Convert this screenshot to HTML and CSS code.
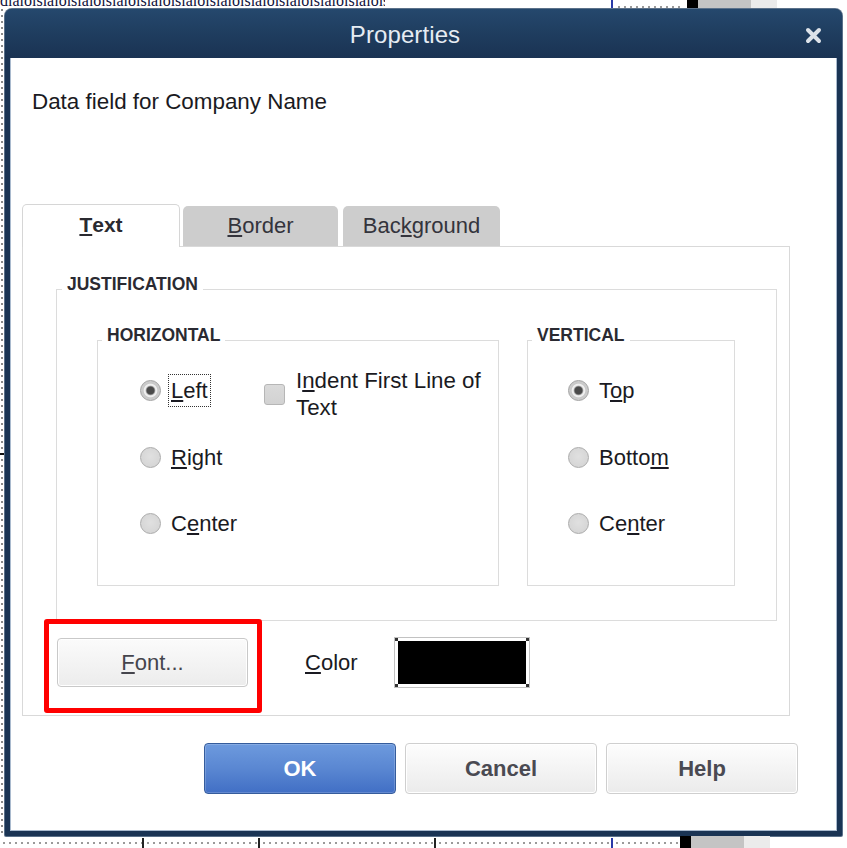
FILE: index.html
```html
<!DOCTYPE html>
<html lang="en">
<head>
<meta charset="utf-8">
<title>Properties</title>
<link rel="stylesheet" href="styles.css">
</head>
<body>
<div class="screen">
  <div class="top-strip">
    <div class="doc-text">dlalolslalolslalolslalolslalolslalolslalolslalolslalolslalolslalolslalolsl,</div>
    <div class="dash"></div>
    <div class="tick"></div>
    <div class="dots"></div>
    <div class="col-black"></div>
    <div class="col-gray"></div>
    <div class="col-light"></div>
  </div>

  <div class="middle">
    <div class="gutter-left"></div>
    <div class="dialog">
      <div class="titlebar">
        <div class="title">Properties</div>
        <div class="close">
          <svg width="17" height="17" viewBox="0 0 17 17" aria-hidden="true">
            <path d="M3 3 L14 14 M14 3 L3 14" stroke="currentColor" stroke-width="4" stroke-linecap="round" fill="none"/>
          </svg>
        </div>
      </div>

      <div class="body">
        <div class="desc">Data field for Company Name</div>

        <div class="tabs">
          <div class="tab active"><u>T</u>ext</div>
          <div class="tab tab-border"><u>B</u>order</div>
          <div class="tab tab-bg">Bac<u>k</u>ground</div>
        </div>

        <div class="panel">
          <fieldset class="group just">
            <legend class="just-legend">JUSTIFICATION</legend>
            <div class="just-row">
              <fieldset class="group horiz">
                <legend>HORIZONTAL</legend>
                <div class="group-body horiz-body">
                  <div class="radio-col">
                    <div class="opt"><span class="radio on"></span><span class="focus"><u>L</u>eft</span></div>
                    <div class="opt"><span class="radio"></span><span class="lbl"><u>R</u>ight</span></div>
                    <div class="opt"><span class="radio"></span><span class="lbl">C<u>e</u>nter</span></div>
                  </div>
                  <div class="check-opt">
                    <span class="checkbox"></span>
                    <span class="check-label">I<u>n</u>dent First Line of Text</span>
                  </div>
                </div>
              </fieldset>
              <fieldset class="group vert">
                <legend>VERTICAL</legend>
                <div class="group-body vert-body">
                  <div class="radio-col">
                    <div class="opt"><span class="radio on"></span><span class="lbl">T<u>o</u>p</span></div>
                    <div class="opt"><span class="radio"></span><span class="lbl">Botto<u>m</u></span></div>
                    <div class="opt"><span class="radio"></span><span class="lbl">Ce<u>n</u>ter</span></div>
                  </div>
                </div>
              </fieldset>
            </div>
          </fieldset>

          <div class="font-row">
            <div class="font-wrap">
              <button class="btn btn-font" type="button"><u>F</u>ont...</button>
              <div class="highlight"></div>
            </div>
            <span class="color-label"><u>C</u>olor</span>
            <div class="swatch"><div class="swatch-fill"></div></div>
          </div>
        </div>

        <div class="actions">
          <button class="btn btn-primary" type="button">OK</button>
          <button class="btn btn-plain" type="button">Cancel</button>
          <button class="btn btn-plain" type="button">Help</button>
        </div>
      </div>
    </div>
    <div class="gutter-right"></div>
  </div>

  <div class="bottom-strip">
    <div class="seg seg1"></div>
    <div class="vline"></div>
    <div class="seg seg2"></div>
    <div class="vline"></div>
    <div class="seg seg3"></div>
    <div class="vline"></div>
    <div class="seg seg4"></div>
    <div class="vline blue"></div>
    <div class="seg seg5"></div>
    <div class="col-black"></div>
    <div class="col-gray"></div>
    <div class="col-light"></div>
  </div>
</div>
</body>
</html>
```

FILE: styles.css
```css
* { box-sizing: border-box; }

html, body {
  margin: 0;
  padding: 0;
  background: #ffffff;
}

body {
  width: 847px;
  height: 848px;
  overflow: hidden;
  font-family: "Liberation Sans", Arial, sans-serif;
  color: #1c1c24;
}

.screen {
  display: flex;
  flex-direction: column;
  width: 847px;
  height: 848px;
}

/* ---------- background strips (document behind the dialog) ---------- */
.top-strip {
  display: flex;
  height: 9px;
  flex: none;
  overflow: hidden;
}

.doc-text {
  width: 385px;
  height: 17px;
  margin-top: -8px;
  font-family: "Liberation Serif", "Times New Roman", serif;
  font-size: 16px;
  line-height: 17px;
  white-space: nowrap;
  overflow: hidden;
  color: #10103a;
  flex: none;
}

.dash {
  width: 220px;
  margin-left: 3px;
  height: 9px;
  border-bottom: 1px dashed #2a3aa8;
  flex: none;
}

.tick {
  width: 2px;
  margin-left: 3px;
  background: #2a3aa8;
  flex: none;
}

.dots {
  width: 63px;
  margin-left: 5px;
  flex: none;
  background: repeating-linear-gradient(90deg, #9a9a9a 0 2px, transparent 2px 6px) 0 6px / 100% 2px no-repeat;
}

.col-black { width: 11px; margin-left: 6px; background: #000; flex: none; }
.col-gray { width: 53px; background: #c4c4c4; flex: none; }
.col-light { width: 26px; background: #ebebeb; flex: none; }

.middle {
  display: flex;
  height: 827px;
  flex: none;
}

.gutter-left {
  width: 5px;
  flex: none;
  background:
    linear-gradient(#111, #111) 0 444px / 5px 2px no-repeat,
    repeating-linear-gradient(180deg, #8a8a8a 0 2px, transparent 2px 6px) 1px 0 / 2px 100% no-repeat;
}

.gutter-right { width: 5px; flex: none; }

.bottom-strip {
  display: flex;
  height: 12px;
  flex: none;
}

.seg {
  flex: none;
  background: repeating-linear-gradient(90deg, #9a9a9a 0 2px, transparent 2px 6px) 3px 6px / 100% 2px no-repeat;
}
.seg1 { width: 142px; }
.seg2 { width: 114px; }
.seg3 { width: 174px; }
.seg4 { width: 175px; }
.seg5 { width: 67px; }
.bottom-strip .col-black { margin-left: 0; }

.vline { width: 2px; background: #222; flex: none; margin-top: 2px; }
.vline.blue { background: #2a3aa8; }

/* ---------------------------- dialog ---------------------------- */
.dialog {
  width: 837px;
  height: 827px;
  flex: none;
  display: flex;
  flex-direction: column;
  background: #1a3454;
  border-radius: 7px 7px 1px 1px;
  overflow: hidden;
  box-shadow: 0 0 0 1px #5b718a;
}

.titlebar {
  height: 49px;
  flex: none;
  display: flex;
  align-items: center;
  background: linear-gradient(to bottom, #25486d 0%, #1f3d5f 50%, #1a3353 100%);
  color: #e6ecf3;
}

.title {
  flex: 1;
  text-align: center;
  font-size: 24px;
  line-height: 28px;
  letter-spacing: 0.1px;
  margin-top: 2px;
}

.close {
  width: 37px;
  flex: none;
  display: flex;
  align-items: center;
  color: #dde3ea;
  margin-top: 4px;
}
.close svg { display: block; }

.body {
  flex: 1;
  margin: 0 5px 5px;
  background: #ffffff;
  box-shadow: inset 1px 0 0 #a9bace, inset -1px 0 0 #a9bace, inset 0 -1px 0 #a9bace;
  display: flex;
  flex-direction: column;
}

.desc {
  margin: 31px 0 0 22px;
  font-size: 22.4px;
  line-height: 25px;
  color: #1a1a22;
}

/* ---------- tabs ---------- */
.tabs {
  display: flex;
  align-items: flex-end;
  margin: 90px 0 0 12px;
}

.tab {
  height: 40px;
  display: flex;
  align-items: center;
  justify-content: center;
  font-size: 22px;
  color: #34343c;
  background: #cdcdcd;
  border-radius: 5px 5px 0 0;
}

.tab.active {
  width: 158px;
  height: 43px;
  margin-bottom: -1px;
  background: #ffffff;
  border: 1px solid #d6d6d6;
  border-bottom: none;
  position: relative;
  z-index: 1;
  font-weight: bold;
  font-size: 21px;
  color: #2a2a30;
  padding-bottom: 2px;
}

.tab-border { width: 155px; margin-left: 3px; }
.tab-bg { width: 157px; margin-left: 5px; }

/* ---------- panel ---------- */
.panel {
  width: 768px;
  margin-left: 12px;
  border: 1px solid #d9d9d9;
  padding: 27px 12px 27px 33px;
}

fieldset.group {
  margin: 0;
  border: 1px solid #dcdcdc;
  min-width: 0;
}

fieldset.group legend {
  font-size: 17.5px;
  font-weight: bold;
  line-height: 20px;
  padding: 0 5px 11px;
  margin-left: 4px;
  color: #2a2a32;
}

fieldset.group legend.just-legend {
  margin-left: -35px;
}

.just {
  width: 721px;
  padding: 20px 41px 34px 40px;
}

.just-row {
  display: flex;
  gap: 28px;
}

.horiz { width: 402px; padding: 0; }
.vert { width: 208px; padding: 0; }

.group-body {
  height: 229px;
  padding-top: 18px;
}

.horiz-body {
  display: flex;
  align-items: flex-start;
  padding-left: 42px;
}

.vert-body {
  padding-left: 40px;
}

.radio-col {
  display: flex;
  flex-direction: column;
  gap: 33.5px;
}

.horiz-body .radio-col { width: 124px; flex: none; }

.opt {
  display: flex;
  align-items: center;
  height: 33px;
  font-size: 22px;
  color: #1a1a22;
}

.radio {
  width: 21px;
  height: 21px;
  flex: none;
  border-radius: 50%;
  border: 1px solid #ababab;
  background: radial-gradient(circle at 50% 45%, #e0e0e0 0%, #d2d2d2 100%);
  margin-right: 10px;
}

.radio.on {
  border-color: #a2a2a2;
  background: radial-gradient(circle, #4a4a4a 0 3.5px, #8a8a8a 4.2px, #ececec 5.2px, #f1f1f1 6.3px, #c9c9c9 7.3px, #d3d3d3 100%);
}

.focus {
  margin-left: -3px;
  padding: 0 2px;
  border: 1px dotted #333;
  line-height: 31px;
}

.lbl { line-height: 31px; }

u {
  text-decoration: underline;
  text-decoration-thickness: 1.5px;
  text-underline-offset: 2px;
}

.check-opt {
  display: flex;
  align-items: center;
  margin-top: -7px;
}

.checkbox {
  width: 21px;
  height: 21px;
  flex: none;
  border: 1px solid #b6b6b6;
  border-radius: 3px;
  background: linear-gradient(#dadada, #d2d2d2);
  margin-right: 11px;
}

.check-label {
  width: 194px;
  font-size: 22.3px;
  line-height: 27px;
  color: #1a1a22;
}

/* ---------- font row ---------- */
.font-row {
  display: flex;
  align-items: center;
  height: 51px;
  margin-top: 16px;
}

.font-wrap {
  position: relative;
  margin-left: 1px;
  width: 191px;
  height: 49px;
  flex: none;
}

.btn {
  font-family: "Liberation Sans", Arial, sans-serif;
  border-radius: 4px;
  padding: 0;
  margin: 0;
  cursor: default;
}

.btn-font {
  width: 191px;
  height: 49px;
  border: 1px solid #c9c9c9;
  background: linear-gradient(#fbfbfb, #ececec);
  box-shadow: inset 0 0 0 1px #ffffff;
  font-size: 22px;
  color: #45454d;
}

.highlight {
  position: absolute;
  left: -13px;
  top: -19px;
  right: -14px;
  bottom: -26px;
  border: 5px solid #ff0000;
  border-radius: 3px;
  pointer-events: none;
}

.color-label {
  margin-left: 57px;
  font-size: 22px;
  color: #1a1a22;
}

.swatch {
  margin-left: 36px;
  width: 136px;
  height: 51px;
  flex: none;
  border: 1px solid #c2c2c2;
  padding: 3px;
  background:
    linear-gradient(#333, #333) left top / 3px 3px no-repeat,
    linear-gradient(#333, #333) right top / 3px 3px no-repeat,
    linear-gradient(#333, #333) left bottom / 3px 3px no-repeat,
    linear-gradient(#333, #333) right bottom / 3px 3px no-repeat,
    #ffffff;
}

.swatch-fill {
  width: 100%;
  height: 100%;
  background: #000000;
}

/* ---------- bottom actions ---------- */
.actions {
  display: flex;
  justify-content: flex-end;
  gap: 9px;
  margin-top: 27px;
  padding-right: 39px;
}

.actions .btn {
  width: 192px;
  height: 51px;
  font-size: 22px;
  font-weight: bold;
}

.btn-primary {
  border: 1px solid #355c9c;
  background: linear-gradient(#6d9ade, #5a87d2 50%, #416fc5);
  color: #ffffff;
  box-shadow: inset 0 0 0 1px rgba(255, 255, 255, 0.18);
}

.btn-plain {
  border: 1px solid #cfcfcf;
  background: linear-gradient(#fdfdfd, #ebebeb);
  color: #4a4a52;
  box-shadow: inset 0 0 0 1px #ffffff;
}
```
